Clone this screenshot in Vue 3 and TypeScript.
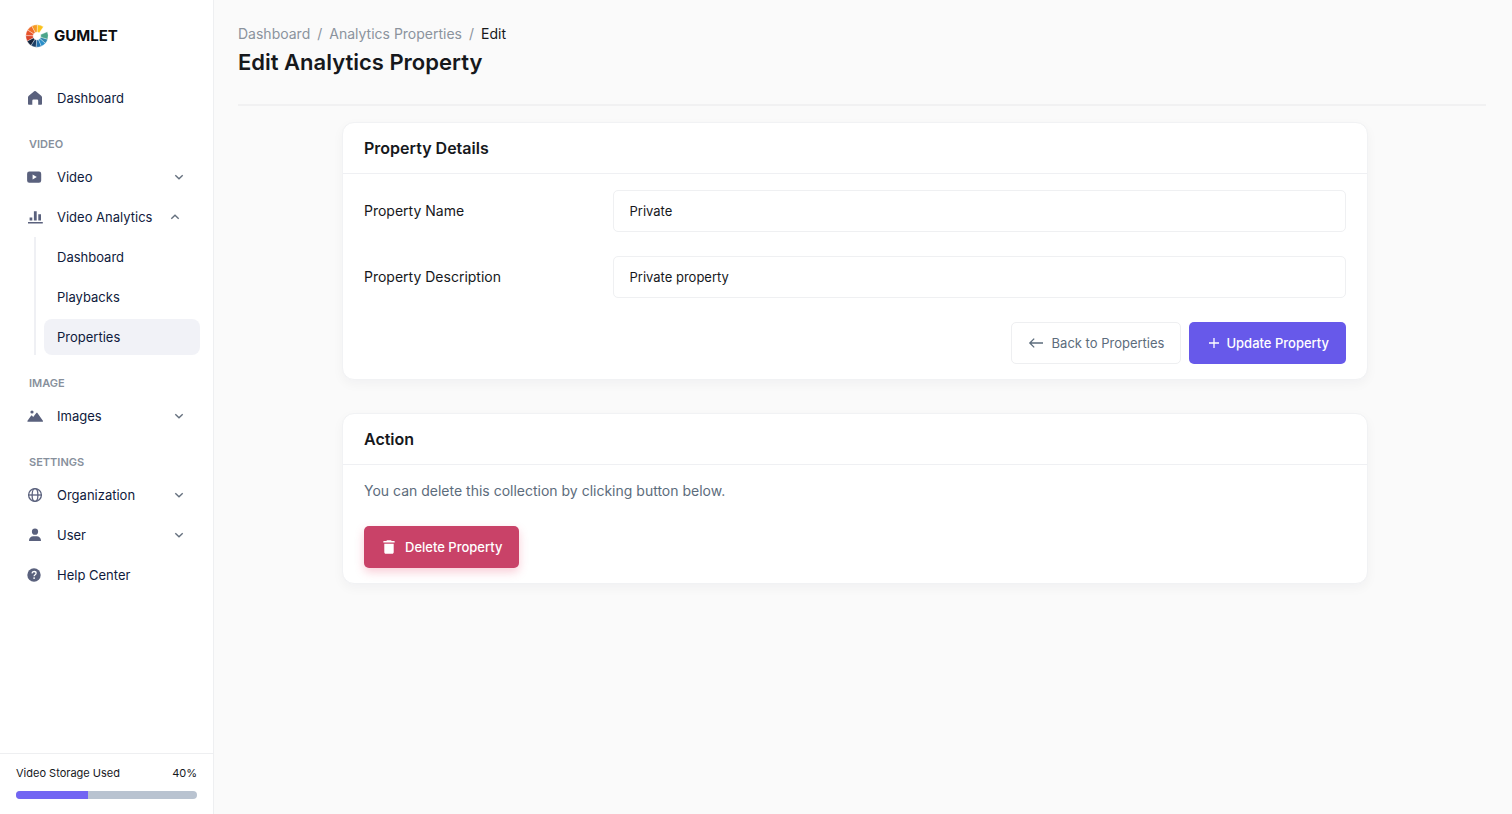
<script setup lang="ts">
import { ref } from 'vue'

interface NavItem {
  label: string
  icon: string
  expandable?: boolean
  open?: boolean
  children?: string[]
}

interface NavGroup {
  title?: string
  items: NavItem[]
}

const groups: NavGroup[] = [
  { items: [{ label: 'Dashboard', icon: 'home' }] },
  {
    title: 'Video',
    items: [
      { label: 'Video', icon: 'video', expandable: true },
      {
        label: 'Video Analytics',
        icon: 'chart',
        expandable: true,
        open: true,
        children: ['Dashboard', 'Playbacks', 'Properties'],
      },
    ],
  },
  { title: 'Image', items: [{ label: 'Images', icon: 'image', expandable: true }] },
  {
    title: 'Settings',
    items: [
      { label: 'Organization', icon: 'globe', expandable: true },
      { label: 'User', icon: 'user', expandable: true },
      { label: 'Help Center', icon: 'help' },
    ],
  },
]

const activeChild = 'Properties'
const propertyName = ref('Private')
const propertyDescription = ref('Private property')
const storageUsed = 40

// Ring segments of the logo: start angle, end angle (degrees, counterclockwise), colour
const segments: [number, number, string][] = [
  [55, 88, '#fbc21c'],
  [88, 118, '#f59a23'],
  [118, 148, '#ee6c2b'],
  [148, 178, '#e8542b'],
  [178, 208, '#d9452b'],
  [208, 238, '#14233c'],
  [238, 266, '#1c3f66'],
  [266, 293, '#2171ad'],
  [293, 319, '#2a8fca'],
  [319, 343, '#3187b0'],
  [343, 382, '#4ba58a'],
]

function wedge(from: number, to: number): string {
  const point = (radius: number, deg: number) => {
    const rad = (deg * Math.PI) / 180
    return `${(12 + radius * Math.cos(rad)).toFixed(2)} ${(12 - radius * Math.sin(rad)).toFixed(2)}`
  }
  return `M${point(4, from)}L${point(11.2, from)}A11.2 11.2 0 0 0 ${point(11.2, to)}L${point(4, to)}Z`
}
</script>

<template>
  <div class="app">
    <aside class="sidebar">
      <a class="brand" href="#">
        <svg class="brand-mark" viewBox="0 0 24 24" aria-hidden="true">
          <path
            v-for="[from, to, color] in segments"
            :key="from"
            :d="wedge(from, to)"
            :fill="color"
            stroke="#fff"
            stroke-width="0.35"
          />
        </svg>
        <span class="brand-name">GUMLET</span>
      </a>

      <nav class="nav">
        <section v-for="(group, index) in groups" :key="index">
          <h2 v-if="group.title" class="group-title">{{ group.title }}</h2>
          <template v-for="item in group.items" :key="item.label">
            <component
              :is="item.expandable ? 'button' : 'a'"
              class="nav-item"
              :class="{ open: item.open }"
              :href="item.expandable ? undefined : '#'"
              :type="item.expandable ? 'button' : undefined"
              :aria-expanded="item.expandable ? !!item.open : undefined"
            >
              <svg class="nav-icon" viewBox="0 0 18 18" fill="currentColor" aria-hidden="true">
                <path
                  v-if="item.icon === 'home'"
                  d="M8.2 2.2a1.300 1.300 0 0 1 1.600 0l5.400 4.500c.5.400.8.900.8 1.500V15a.8.8 0 0 1-.8.8h-3V11.800A1.200 1.200 0 0 0 11 10.600H7.500a1.200 1.200 0 0 0-1.200 1.200v4H2.800A.8.8 0 0 1 2 15V8.200c0-.6.300-1.100.8-1.500z"
                />
                <path
                  v-else-if="item.icon === 'video'"
                  fill-rule="evenodd"
                  d="M3.300 3.600h9.700a2.200 2.200 0 0 1 2.200 2.200v6.700a2.200 2.200 0 0 1-2.200 2.200H3.300A2.200 2.200 0 0 1 1.100 12.500V5.800A2.200 2.200 0 0 1 3.300 3.600zM6.600 6.600v5L10.800 9.100z"
                />
                <path
                  v-else-if="item.icon === 'chart'"
                  d="M2 13.900h14.800v1.500H2zM3.600 9.500h2.700v3H3.600zM7.900 3.300h2.800v9.200H7.900zM12.300 6.300H15v6.200h-2.700z"
                />
                <g v-else-if="item.icon === 'image'">
                  <circle cx="6" cy="5" r="1.600" />
                  <path
                    d="M1.500 13.700l3.400-4.800c.4-.5 1-.5 1.400 0l.9 1.200 2.900-3.900c.4-.5 1.100-.5 1.500 0l5.300 7.500c.3.500 0 1-.5 1H2c-.5 0-.8-.5-.5-1z"
                  />
                </g>
                <g v-else-if="item.icon === 'globe'" fill="none" stroke="currentColor" stroke-width="1.300">
                  <circle cx="9" cy="9" r="6.400" />
                  <ellipse cx="9" cy="9" rx="2.900" ry="6.400" />
                  <path d="M2.600 9h12.800" />
                </g>
                <g v-else-if="item.icon === 'user'">
                  <circle cx="9" cy="5.700" r="3.100" />
                  <path d="M3 14.500c0-2.600 2-4.200 4.200-4.200h3.600c2.200 0 4.200 1.600 4.200 4.200 0 .4-.2.600-.5.600h-11c-.3 0-.5-.2-.5-.6z" />
                </g>
                <g v-else>
                  <circle cx="8" cy="9" r="6.700" />
                  <path
                    d="M6 7.400C6.100 6.100 7 5.500 8.100 5.500c1.200 0 2 .7 2 1.700 0 1.500-2 1.500-2 3"
                    fill="none"
                    stroke="#fff"
                    stroke-width="1.300"
                  />
                  <circle cx="8.100" cy="12.100" r=".9" fill="#fff" />
                </g>
              </svg>
              <span>{{ item.label }}</span>
              <svg v-if="item.expandable" class="chevron" viewBox="0 0 10 10" aria-hidden="true">
                <path :d="item.open ? 'M1.300 6.800L5 3.200l3.700 3.600' : 'M1.300 3.200L5 6.800l3.700-3.600'" />
              </svg>
            </component>
            <ul v-if="item.children" class="children">
              <li v-for="child in item.children" :key="child">
                <a href="#" class="child" :class="{ active: child === activeChild }">{{ child }}</a>
              </li>
            </ul>
          </template>
        </section>
      </nav>

      <div class="storage">
        <div class="storage-text">
          <span>Video Storage Used</span>
          <span>{{ storageUsed }}%</span>
        </div>
        <div class="storage-track">
          <div class="storage-fill" :style="{ width: storageUsed + '%' }"></div>
        </div>
      </div>
    </aside>

    <main class="main">
      <header class="page-header">
        <nav class="breadcrumb" aria-label="Breadcrumb">
          <a href="#">Dashboard</a>
          <span>/</span>
          <a href="#">Analytics Properties</a>
          <span>/</span>
          <span class="current">Edit</span>
        </nav>
        <h1>Edit Analytics Property</h1>
      </header>

      <div class="content">
        <form class="card" @submit.prevent>
          <h2 class="card-title">Property Details</h2>
          <div class="card-body">
            <div class="field">
              <label for="property-name">Property Name</label>
              <input id="property-name" v-model="propertyName" type="text" />
            </div>
            <div class="field">
              <label for="property-description">Property Description</label>
              <input id="property-description" v-model="propertyDescription" type="text" />
            </div>
            <div class="actions">
              <button type="button" class="btn btn-outline">
                <svg viewBox="0 0 16 16" aria-hidden="true">
                  <path d="M15 8H2M6.200 3.600L1.800 8l4.400 4.400" />
                </svg>
                Back to Properties
              </button>
              <button type="submit" class="btn btn-primary">
                <svg class="plus" viewBox="0 0 12 12" aria-hidden="true">
                  <path d="M6 1v10M1 6h10" />
                </svg>
                Update Property
              </button>
            </div>
          </div>
        </form>

        <section class="card">
          <h2 class="card-title">Action</h2>
          <div class="card-body">
            <p class="note">You can delete this collection by clicking button below.</p>
            <button type="button" class="btn btn-danger">
              <svg class="trash" viewBox="0 0 16 16" aria-hidden="true">
                <path
                  d="M6 1.200h4l.7.9h2.500c.3 0 .5.200.5.500v.9H2.300v-.9c0-.3.200-.5.500-.5h2.500zM3.300 4.800h9.400V13.300c0 .9-.6 1.500-1.500 1.500H4.800c-.9 0-1.500-.6-1.500-1.500z"
                />
              </svg>
              Delete Property
            </button>
          </div>
        </section>
      </div>
    </main>
  </div>
</template>

<style>
body {
  margin: 0;
  background: #fafafa;
}
</style>

<style scoped>
.app {
  display: flex;
  min-height: 100vh;
  font-family: Inter, 'Liberation Sans', sans-serif;
  font-size: 14px;
  line-height: 20px;
  color: #16181c;
}

.app *,
.app {
  box-sizing: border-box;
}

a {
  color: inherit;
  text-decoration: none;
}

button,
input {
  font: inherit;
  color: inherit;
}

.sidebar {
  display: flex;
  flex-direction: column;
  flex: 0 0 214px;
  background: #fff;
  border-right: 1px solid #eeeff1;
}

.brand {
  display: flex;
  align-items: center;
  gap: 5px;
  height: 72px;
  padding-left: 25px;
}

.brand-mark {
  width: 24px;
  height: 24px;
}

.brand-name {
  font-size: 15px;
  font-weight: 700;
  color: #0c0d10;
}

.nav {
  flex: 1;
  padding-top: 6px;
  font-size: 13px;
  color: #0f1a3c;
}

.group-title {
  margin: 0;
  padding: 16px 29px 3px;
  font-size: 11px;
  font-weight: 600;
  line-height: 20px;
  text-transform: uppercase;
  color: #87909c;
}

.nav-item {
  display: flex;
  align-items: center;
  gap: 13px;
  width: 100%;
  height: 40px;
  padding: 0 29px 0 26px;
  border: 0;
  background: none;
  text-align: left;
  white-space: nowrap;
  cursor: pointer;
}

.nav-item.open {
  padding-right: 33px;
}

.nav-icon {
  flex: none;
  width: 18px;
  height: 18px;
  color: #5a617d;
}

.chevron {
  width: 10px;
  height: 10px;
  margin-left: auto;
  fill: none;
  stroke: #66717f;
  stroke-width: 1.4;
}

.children {
  margin: 0 0 2px 34px;
  padding: 0 13px 0 8px;
  border-left: 2px solid #eff0f4;
  list-style: none;
}

.children li {
  padding: 2px 0;
}

.children li:last-child {
  padding-bottom: 0;
}

.child {
  display: block;
  padding: 8px 13px;
  border-radius: 8px;
}

.child.active {
  background: #f1f2f7;
}

.storage {
  padding: 9px 16px 15px;
  border-top: 1px solid #eeeff1;
  font-size: 11px;
}

.storage-text {
  display: flex;
  justify-content: space-between;
  margin-bottom: 8px;
}

.storage-track {
  height: 8px;
  border-radius: 4px;
  overflow: hidden;
  background: #b9c3d0;
}

.storage-fill {
  height: 100%;
  background: #7265f3;
}

.main {
  flex: 1;
  min-width: 0;
  padding: 24px 26px 24px 24px;
}

.page-header {
  padding-bottom: 26px;
  border-bottom: 2px solid #f1f1f2;
}

.breadcrumb {
  display: flex;
  gap: 7px;
  color: #8b939d;
}

.breadcrumb .current {
  color: #16181c;
}

h1 {
  margin: 2px 0 0;
  font-size: 22px;
  font-weight: 600;
  line-height: 32px;
}

.content {
  display: flex;
  flex-direction: column;
  align-items: center;
  gap: 33px;
  padding: 16px 14px 0 0;
}

.card {
  width: 100%;
  max-width: 1026px;
  border: 1px solid #f1f2f4;
  border-radius: 12px;
  background: #fff;
  box-shadow: 0 4px 12px rgba(20, 20, 40, 0.04);
}

.card-title {
  margin: 0;
  padding: 13px 21px;
  border-bottom: 1px solid #eff0f3;
  font-size: 16px;
  font-weight: 600;
  line-height: 24px;
}

.card-body {
  padding: 16px 21px 15px;
}

.field {
  display: flex;
  align-items: center;
  gap: 3px;
  margin-bottom: 24px;
}

.field label {
  flex: 0 0 25%;
}

.field input {
  flex: 1;
  min-width: 0;
  height: 42px;
  padding: 0 16px;
  border: 1px solid #eff0f2;
  border-radius: 5px;
  background: #fff;
  font-size: 13px;
}

.actions {
  display: flex;
  justify-content: flex-end;
  gap: 8px;
}

.btn {
  display: inline-flex;
  align-items: center;
  gap: 8px;
  height: 42px;
  padding: 0 16px;
  border: 1px solid transparent;
  border-radius: 5px;
  font-size: 13px;
  cursor: pointer;
}

.btn svg {
  width: 16px;
  height: 16px;
  fill: none;
  stroke: currentColor;
  stroke-width: 1.3;
}

.btn-outline {
  border-color: #eeeff1;
  background: #fff;
  color: #5c6c7c;
}

.btn-primary {
  padding-left: 18px;
  gap: 6px;
  background: #6759ea;
  color: #fff;
  font-weight: 500;
}

.btn .plus {
  width: 12px;
  height: 12px;
}

.btn-danger {
  background: #c94268;
  color: #fff;
  font-weight: 500;
  box-shadow: 0 4px 10px rgba(230, 60, 100, 0.26);
}

.btn .trash {
  fill: currentColor;
  stroke: none;
}

.note {
  margin: 0 0 25px;
  color: #5c6c7c;
}
</style>
